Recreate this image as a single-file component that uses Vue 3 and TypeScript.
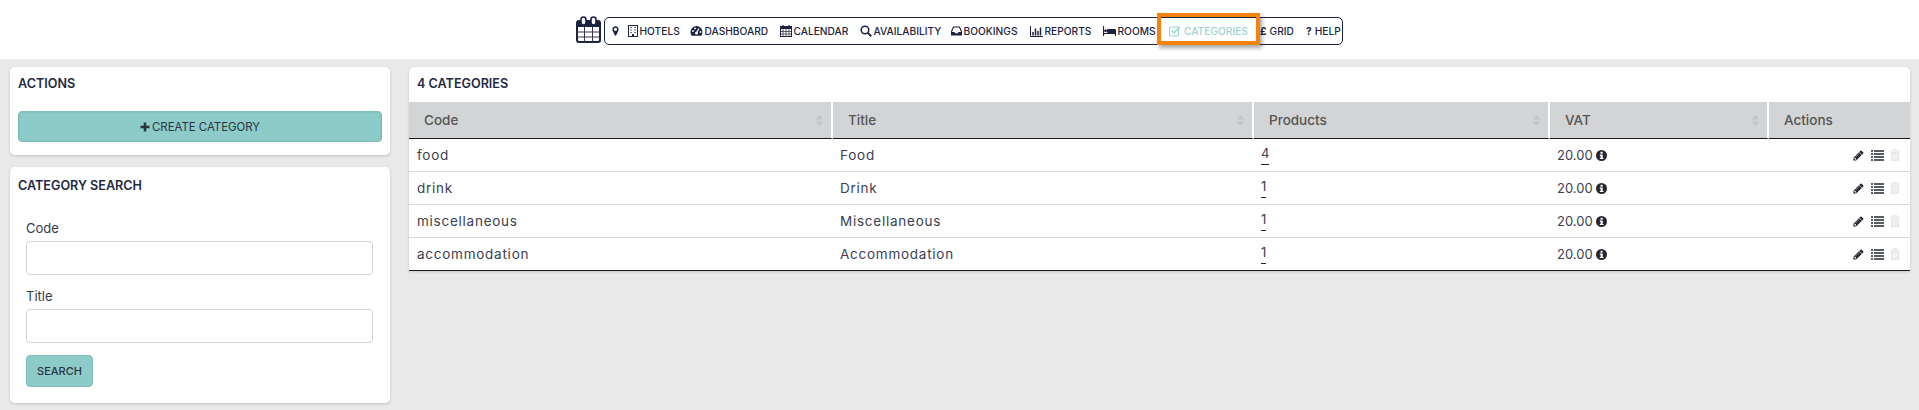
<script setup lang="ts">
interface Row { code: string; title: string; products: number; vat: string }
const rows: Row[] = [
  { code: 'food', title: 'Food', products: 4, vat: '20.00' },
  { code: 'drink', title: 'Drink', products: 1, vat: '20.00' },
  { code: 'miscellaneous', title: 'Miscellaneous', products: 1, vat: '20.00' },
  { code: 'accommodation', title: 'Accommodation', products: 1, vat: '20.00' },
]
const heads = ['Code', 'Title', 'Products', 'VAT']
</script>

<template>
  <div class="page">
    <header class="top">
      <svg class="logo" viewBox="0 0 25 27" width="25" height="27">
        <rect x="1" y="5" width="23" height="21" rx="2" fill="#fff" stroke="#1c2340" stroke-width="2" />
        <rect x="1" y="5" width="23" height="6" fill="#1c2340" />
        <rect x="5" y="1" width="5" height="8" rx="2.5" fill="#fff" stroke="#1c2340" stroke-width="1.6" />
        <rect x="15" y="1" width="5" height="8" rx="2.5" fill="#fff" stroke="#1c2340" stroke-width="1.6" />
        <path d="M1 16h23M1 21h23M8.5 11v15M16.500 11v15" stroke="#3a3550" stroke-width="1" fill="none" />
      </svg>
      <nav class="nav">
        <span class="item pin">
          <svg width="11" height="12" viewBox="0 0 1792 1792"><path d="M1152 640q0-106-75-181t-181-75-181 75-75 181 75 181 181 75 181-75 75-181zm256 0q0 109-33 179l-364 774q-16 33-47.500 52t-67.500 19-67.500-19-46.500-52l-365-774q-33-70-33-179 0-212 150-362t362-150 362 150 150 362z" fill="#1c2340" /></svg>
        </span>
        <a class="item hotels">
          <svg width="10" height="12" viewBox="0 0 10 12"><rect x=".5" y=".5" width="9" height="11" fill="none" stroke="#1c2340" /><path d="M2 2.500h2M6 2.500h2M2 5h2M6 5h2M2 7.500h2M6 7.500h2" stroke="#6a7080" /><rect x="4" y="9" width="2" height="2.500" fill="#1c2340" /></svg>
          HOTELS
        </a>
        <a class="item dash">
          <svg width="13" height="12" viewBox="0 0 13 12"><path d="M6.500 1A6 6 0 0 0 .5 7c0 1.500.5 2.800 1.300 3.800h9.400A6 6 0 0 0 12.500 7a6 6 0 0 0-6-6z" fill="#1c2340" /><circle cx="6.500" cy="8" r="1.500" fill="#fff" /><path d="M6.500 8L9 3.500" stroke="#fff" stroke-width="1.200" /><circle cx="3" cy="6" r=".9" fill="#fff" /><circle cx="5" cy="3.500" r=".9" fill="#fff" /><circle cx="10.500" cy="7" r=".9" fill="#fff" /></svg>
          DASHBOARD
        </a>
        <a class="item cal">
          <svg width="12" height="12" viewBox="0 0 12 12"><rect x=".5" y="1.500" width="11" height="10" fill="none" stroke="#1c2340" /><rect x="0" y="1.500" width="12" height="2.500" fill="#1c2340" /><path d="M3 0v3M9 0v3" stroke="#1c2340" stroke-width="1.200" /><path d="M0 6.500h12M0 9h12M3 4v8M6 4v8M9 4v8" stroke="#1c2340" stroke-width=".7" /></svg>
          CALENDAR
        </a>
        <a class="item avail">
          <svg width="12" height="12" viewBox="0 0 12 12"><circle cx="5" cy="5" r="3.800" fill="none" stroke="#1c2340" stroke-width="1.500" /><path d="M8 8l3.300 3.300" stroke="#1c2340" stroke-width="1.900" /></svg>
          AVAILABILITY
        </a>
        <a class="item book">
          <svg width="11" height="10" viewBox="0 0 11 10"><path d="M2.500 1h6L10.500 5.500V9H.5V5.500z" fill="none" stroke="#1c2340" stroke-width="1.200" /><path d="M.5 6h3l.8 1.200h2.400L7.500 6h3v3H.5z" fill="#1c2340" /></svg>
          BOOKINGS
        </a>
        <a class="item rep">
          <svg width="13" height="11" viewBox="0 0 13 11"><path d="M.5 0v10.500H13" fill="none" stroke="#1c2340" /><path d="M3 9.500V6M5.500 9.500V2.500M8 9.500V5M10.500 9.500V1.500" stroke="#1c2340" stroke-width="1.500" /></svg>
          REPORTS
        </a>
        <a class="item rooms">
          <svg width="13" height="10" viewBox="0 0 13 10"><path d="M.5 0v10M.5 7.500h12M12.500 10V5" stroke="#1c2340" fill="none" stroke-width="1.200" /><rect x="4" y="3" width="9" height="4" rx="1" fill="#1c2340" /><circle cx="2.500" cy="4.800" r="1.400" fill="#1c2340" /></svg>
          ROOMS
        </a>
        <a class="item cats">
          <svg width="12" height="12" viewBox="0 0 12 12"><rect x=".6" y="2" width="9" height="9" rx="1.200" fill="none" stroke="#9ad3cf" stroke-width="1.200" /><path d="M2.800 5.800l2.200 2.200 5.800-6" fill="none" stroke="#9ad3cf" stroke-width="1.500" /></svg>
          CATEGORIES
        </a>
        <a class="item grid"><b class="glyph">£</b> GRID</a>
        <a class="item help"><b class="glyph">?</b> HELP</a>
        <span class="spot"></span>
      </nav>
    </header>

    <main class="body">
      <aside class="side">
        <section class="card actions">
          <h3>ACTIONS</h3>
          <button class="wide" type="button">
            <svg width="10" height="10" viewBox="0 0 10 10"><path d="M5 .5v9M.5 5h9" stroke="#2c3240" stroke-width="2.600" /></svg>
            CREATE CATEGORY
          </button>
        </section>
        <section class="card search">
          <h3>CATEGORY SEARCH</h3>
          <form class="form">
            <label for="f-code">Code</label>
            <input id="f-code" type="text" />
            <label for="f-title" class="second">Title</label>
            <input id="f-title" type="text" />
            <button class="go" type="button">SEARCH</button>
          </form>
        </section>
      </aside>

      <section class="card results">
        <h3>4 CATEGORIES</h3>
        <table>
          <colgroup>
            <col class="c1" /><col class="c2" /><col class="c3" /><col class="c4" /><col class="c5" />
          </colgroup>
          <thead>
            <tr>
              <th v-for="h in heads" :key="h">
                {{ h }}
                <svg class="sort" width="7" height="11" viewBox="0 0 7 11"><path d="M3.500 0L7 4.500H0zM3.500 11L0 6.500h7z" fill="#c2c4c7" /></svg>
              </th>
              <th>Actions</th>
            </tr>
          </thead>
          <tbody>
            <tr v-for="r in rows" :key="r.code">
              <td class="wideText">{{ r.code }}</td>
              <td class="wideText">{{ r.title }}</td>
              <td><a class="num">{{ r.products }}</a></td>
              <td>
                <span class="vat">{{ r.vat }}
                  <svg width="11" height="11" viewBox="0 0 11 11"><circle cx="5.500" cy="5.500" r="5.500" fill="#23272f" /><rect x="4.500" y="1.800" width="2.200" height="1.900" fill="#fff" /><path d="M3.800 4.600h2.900v3.300h.8v1.200H3.800V7.900h.8V5.800h-.8z" fill="#fff" /></svg>
                </span>
              </td>
              <td>
                <span class="tools">
                  <svg width="11" height="11" viewBox="64 64 1664 1664"><path d="M491 1536l91-91-235-235-91 91v107h128v128h107zm523-928q0-22-22-22-10 0-17 7l-542 542q-7 7-7 17 0 22 22 22 10 0 17-7l542-542q7-7 7-17zm-54-192l416 416-832 832h-416v-416zm683 96q0 53-37 90l-166 166-416-416 166-165q36-38 90-38 53 0 91 38l235 234q37 39 37 91z" fill="#23272f" /></svg>
                  <svg width="13" height="11" viewBox="0 0 13 11"><path d="M0 1h2M3 1h10M0 4h2M3 4h10M0 7h2M3 7h10M0 10h2M3 10h10" stroke="#23272f" stroke-width="1.700" /></svg>
                  <svg width="10" height="12" viewBox="0 0 10 12"><path d="M0 2h10M3.500 2V.6h3V2" fill="none" stroke="#e6e7e8" stroke-width="1.200" /><path d="M1 3h8v9H1z" fill="#e6e7e8" /><path d="M3.200 4.500v6M5 4.500v6M6.800 4.500v6" stroke="#fff" stroke-width=".7" /></svg>
                </span>
              </td>
            </tr>
          </tbody>
        </table>
      </section>
    </main>
  </div>
</template>

<style>
body { margin: 0; background: #e9e9e9; }
</style>

<style scoped>
.page {
  height: 410px;
  overflow: hidden;
  background: #e9e9e9;
  font-family: Inter, "Open Sans", sans-serif;
  color: #2b3240;
}
.top {
  height: 59px;
  box-sizing: border-box;
  background: #fff;
  display: flex;
  justify-content: center;
  align-items: flex-start;
  padding-top: 16px;
  gap: 3px;
}
.logo { display: block; flex: none; }
.nav {
  position: relative;
  box-sizing: border-box;
  width: 739px;
  height: 28px;
  margin-top: 1px;
  display: flex;
  align-items: center;
  border: 1px solid #1c2340;
  border-radius: 5px;
  padding-left: 5px;
  font-size: 10.2px;
  font-weight: 500;
  color: #1c2340;
  white-space: nowrap;
}
.item { display: inline-flex; align-items: center; gap: 1.5px; flex: none; }
.pin { width: 18px; }
.hotels { width: 62px; }
.dash { width: 90px; }
.cal { width: 80px; }
.avail { width: 91px; }
.book { width: 79px; }
.rep { width: 73px; }
.rooms { width: 66px; }
.cats { width: 91px; color: #9ad3cf; gap: 3px; }
.grid { width: 46px; gap: 3px; }
.help { gap: 3px; }
.glyph { font-weight: 700; }
.spot {
  position: absolute;
  left: 552px;
  top: -5px;
  width: 103px;
  height: 32px;
  box-sizing: border-box;
  border: 4px solid #f5820a;
  box-shadow: 2px 3px 4px rgba(0, 0, 0, 0.35);
}
.body {
  display: flex;
  align-items: flex-start;
  padding: 8px 9px 0 10px;
}
.side {
  flex: none;
  width: 380px;
  display: flex;
  flex-direction: column;
  gap: 12px;
}
.card {
  background: #fff;
  border-radius: 5px;
  box-shadow: 0 1px 3px rgba(0, 0, 0, 0.16);
  box-sizing: border-box;
}
h3 {
  margin: 0;
  font-size: 12.6px;
  line-height: 16px;
  font-weight: 600;
  color: #1f2a44;
}
.actions { height: 88px; padding: 9px 8px 8px; }
.wide {
  display: flex;
  align-items: center;
  justify-content: center;
  gap: 2px;
  width: 364px;
  height: 31px;
  margin-top: 19px;
  background: #8ccbc8;
  border: 1px solid #7dbdba;
  border-radius: 4px;
  font: 400 11.4px Inter, sans-serif;
  color: #2b3240;
  box-shadow: inset 0 0 0 1px #86c4c1;
}
.search { height: 236px; padding: 11px 8px 0; }
.form { display: flex; flex-direction: column; align-items: flex-start; padding: 25px 8px 0; }
label { font-size: 13px; line-height: 18px; color: #333a47; margin-bottom: 4px; }
label.second { margin-top: 12px; margin-bottom: 4px; }
input {
  width: 347px;
  height: 34px;
  box-sizing: border-box;
  border: 1px solid #d3d3d5;
  border-radius: 4px;
  background: #fff;
  padding: 0 8px;
}
.go {
  margin-top: 12px;
  width: 67px;
  height: 32px;
  background: #8ccbc8;
  border: 1px solid #7dbdba;
  border-radius: 4px;
  font: 500 11px Inter, sans-serif;
  color: #2b3240;
  padding: 0;
}
.results {
  margin-left: 19px;
  flex: 1;
  min-width: 0;
  height: 204px;
  overflow: hidden;
  border-radius: 5px 5px 0 0;
}
.results h3 { padding: 9px 8px 0; height: 35px; box-sizing: border-box; }
table {
  width: 100%;
  table-layout: fixed;
  border-collapse: separate;
  border-spacing: 0;
  font-size: 13px;
}
.c1 { width: 424px; }
.c2 { width: 421px; }
.c3 { width: 296px; }
.c4 { width: 219px; }
th {
  position: relative;
  height: 37px;
  background: #d2d4d6;
  text-align: left;
  padding: 0 15px;
  font-weight: 500;
  font-size: 13.5px;
  color: #555;
  border-right: 2px solid #fff;
  border-bottom: 1px solid #15181d;
  box-sizing: border-box;
}
th:last-child { border-right: 0; }
.sort { position: absolute; right: 8px; top: 13px; }
td {
  height: 33px;
  padding: 0 8px 0 7px;
  border-bottom: 1px solid #d8d8da;
  box-sizing: border-box;
  color: #3b4150;
}
td:first-child { padding-left: 8px; }
td:last-child { padding-right: 10px; }
.wideText { font-size: 13.5px; letter-spacing: 0.75px; }
tbody tr:last-child td { border-bottom: 1px solid #15181d; }
.num { display: inline-block; border-bottom: 1px solid #23272f; line-height: 16px; padding-bottom: 3px; }
.vat { display: inline-flex; align-items: center; gap: 3px; }
.tools { display: flex; justify-content: flex-end; align-items: center; gap: 6px; }
.tools svg:first-child { margin-right: 1px; }
</style>
